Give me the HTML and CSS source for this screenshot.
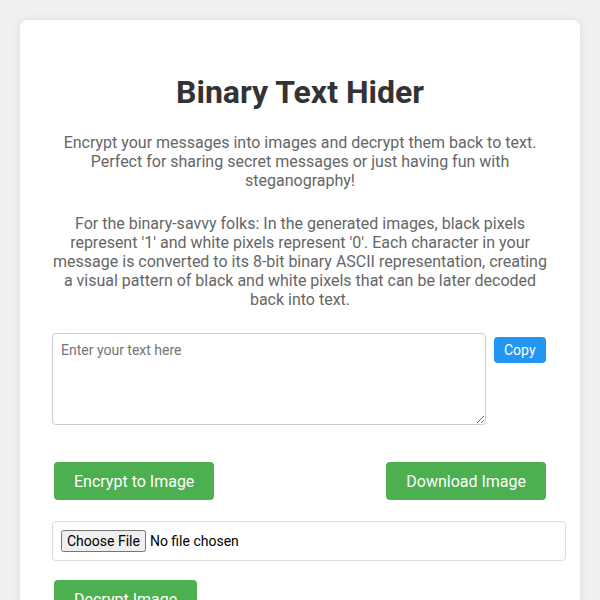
FILE: index.html
```html
<!DOCTYPE html>
<html lang="en">
<head>
    <meta charset="UTF-8">
    <meta name="viewport" content="width=device-width, initial-scale=1.0">
    <title>Binary Text Hider</title>
    <link rel="stylesheet" href="styles.css">
</head>
<body>
    <div class="container">
        <h1>Binary Text Hider</h1>
        <p>Encrypt your messages into images and decrypt them back to text. Perfect for sharing secret messages or just having fun with steganography!</p>
        <p>For the binary-savvy folks: In the generated images, black pixels represent '1' and white pixels represent '0'. Each character in your message is converted to its 8-bit binary ASCII representation, creating a visual pattern of black and white pixels that can be later decoded back into text.</p>

        <div class="text-row">
            <textarea id="text" placeholder="Enter your text here"></textarea>
            <button class="copy-btn">Copy</button>
        </div>

        <div class="actions">
            <button class="btn">Encrypt to Image</button>
            <button class="btn">Download Image</button>
        </div>

        <input type="file" id="file" class="file-input">

        <div class="actions">
            <button class="btn">Decrypt Image</button>
        </div>
    </div>
</body>
</html>
```

FILE: styles.css
```css
* {
    font-family: Roboto, Arial, sans-serif;
}

body {
    margin: 0;
    padding: 20px;
    background: #f0f0f0;
}

.container {
    background: white;
    border-radius: 8px;
    padding: 32px;
    box-shadow: 0 0 10px rgba(0, 0, 0, 0.08);
}

h1 {
    text-align: center;
    color: #333;
    font-size: 32px;
    margin: 21px 0 22px;
}

p {
    text-align: center;
    color: #666;
    font-size: 16px;
    line-height: 19px;
    margin: 0 0 24px;
}

.text-row {
    display: flex;
    align-items: flex-start;
    margin-bottom: 37px;
}

textarea {
    box-sizing: border-box;
    width: 434px;
    height: 92px;
    padding: 8px;
    border: 1px solid #ccc;
    border-radius: 4px;
    font-size: 14px;
    color: #333;
}

textarea::placeholder {
    color: #757575;
}

.copy-btn {
    margin: 4px 0 0 8px;
    padding: 5px 10px;
    height: 26px;
    border: none;
    border-radius: 4px;
    background: #2196f3;
    color: white;
    font-size: 14px;
    cursor: pointer;
}

.actions {
    display: flex;
    justify-content: space-between;
    padding: 0 2px;
}

.btn {
    padding: 10px 20px;
    height: 38px;
    border: none;
    border-radius: 4px;
    background: #4caf50;
    color: white;
    font-size: 16px;
    cursor: pointer;
}

.file-input {
    display: block;
    width: 100%;
    padding: 8px;
    margin: 21px 0 19px;
    border: 1px solid #ddd;
    border-radius: 4px;
    font-size: 14px;
}

.file-input::file-selector-button {
    font-family: Roboto, Arial, sans-serif;
    font-size: 14px;
    padding: 1px 4px;
}
```
